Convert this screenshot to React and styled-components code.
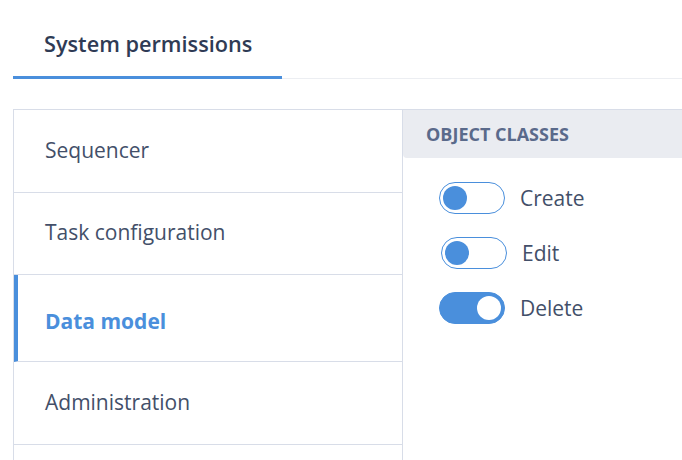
import React, { useState } from "react";
import styled, { createGlobalStyle } from "styled-components";

const GlobalStyle = createGlobalStyle`
  body {
    margin: 0;
    background: #fff;
    font-family: "Open Sans", "Noto Sans", sans-serif;
  }
`;

const modules = ["Sequencer", "Task configuration", "Data model", "Administration"];

const initialPerms = [
  { label: "Create", on: false, shift: 0 },
  { label: "Edit", on: false, shift: 2 },
  { label: "Delete", on: true, shift: 0 },
];

function App() {
  const [active, setActive] = useState("Data model");
  const [perms, setPerms] = useState(initialPerms);

  const togglePerm = i => {
    setPerms(prev => prev.map((p, idx) => (idx === i ? { ...p, on: !p.on } : p)));
  };

  return (
    <>
      <GlobalStyle />
      <Page>
        <TabBar>
          <Tab active>System permissions</Tab>
        </TabBar>
        <Panel>
          <ModuleList>
            {modules.map(m => (
              <ModuleRow key={m} active={m === active} onClick={() => setActive(m)}>
                {m}
              </ModuleRow>
            ))}
          </ModuleList>
          <Details>
            <SectionHeader>OBJECT CLASSES</SectionHeader>
            <PermList>
              {perms.map((p, i) => (
                <PermRow key={p.label} shift={p.shift}>
                  <Switch on={p.on} onClick={() => togglePerm(i)}>
                    <Knob on={p.on} />
                  </Switch>
                  <PermLabel>{p.label}</PermLabel>
                </PermRow>
              ))}
            </PermList>
          </Details>
        </Panel>
      </Page>
    </>
  );
}

export default App;

const Page = styled.div`
  padding-left: 13px;
  height: 460px;
  overflow: hidden;
`;
const TabBar = styled.div`
  display: flex;
  height: 79px;
  border-bottom: 1px solid #eceef2;
  box-sizing: border-box;
`;
const Tab = styled.div`
  width: 269px;
  box-sizing: border-box;
  padding: 29px 0 0 31px;
  font-size: 21.7px;
  font-weight: 600;
  color: #2f3b55;
  border-bottom: 3px solid ${props => (props.active ? "#4a8fdc" : "transparent")};
  margin-bottom: -1px;
  white-space: nowrap;
`;
const Panel = styled.div`
  display: grid;
  grid-template-columns: 390px 1fr;
  margin-top: 30px;
  border-top: 1px solid #d8dde8;
  min-height: 360px;
`;
const ModuleList = styled.div`
  display: flex;
  flex-direction: column;
  border-left: 1px solid #d8dde8;
  border-right: 1px solid #d8dde8;
`;
const ModuleRow = styled.div`
  display: flex;
  align-items: center;
  box-sizing: border-box;
  height: ${props => (props.active ? "87px" : "83px")};
  padding-left: ${props => (props.active ? "27px" : "31px")};
  padding-top: ${props => (props.active ? "5px" : "0")};
  padding-bottom: ${props => (props.active ? "0" : "3px")};
  border-left: ${props => (props.active ? "4px solid #4a8fdc" : "none")};
  border-bottom: 1px solid #d8dde8;
  font-size: 21px;
  font-weight: ${props => (props.active ? 700 : 400)};
  color: ${props => (props.active ? "#4a8fdc" : "#434f69")};
  cursor: pointer;
  &:nth-child(2) {
    height: 82px;
  }
`;
const Details = styled.div`
  display: flex;
  flex-direction: column;
`;
const SectionHeader = styled.div`
  height: 48px;
  display: flex;
  align-items: center;
  padding-left: 23px;
  background: #eaecf1;
  border-bottom-left-radius: 4px;
  font-size: 18px;
  font-weight: 700;
  color: #5a6a8b;
`;
const PermList = styled.div`
  display: flex;
  flex-direction: column;
  gap: 23px;
  padding: 24px 0 0 36px;
`;
const PermRow = styled.div`
  display: flex;
  align-items: center;
  gap: 15px;
  margin-left: ${props => props.shift}px;
`;
const Switch = styled.button`
  position: relative;
  width: 66px;
  height: 32px;
  padding: 0;
  border-radius: 16px;
  border: 1px solid #4a8fdc;
  background: ${props => (props.on ? "#4a8fdc" : "#fff")};
  cursor: pointer;
  flex-shrink: 0;
`;
const Knob = styled.span`
  position: absolute;
  top: 3px;
  left: ${props => (props.on ? "37px" : "3px")};
  width: 24px;
  height: 24px;
  border-radius: 50%;
  background: ${props => (props.on ? "#fff" : "#4a8fdc")};
`;
const PermLabel = styled.span`
  font-size: 21px;
  color: #434f69;
`;
